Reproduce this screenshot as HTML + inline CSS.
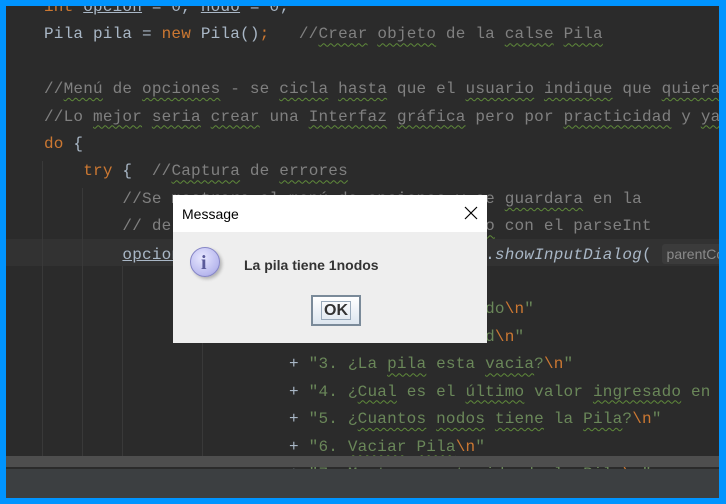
<!DOCTYPE html>
<html><head><meta charset="utf-8"><style>
*{margin:0;padding:0;box-sizing:border-box}
body{width:726px;height:504px;background:#0094ff;position:relative;overflow:hidden;font-family:"Liberation Mono",monospace}
#ed{position:absolute;left:6px;top:6px;width:713px;height:463px;background:#2b2b2b;overflow:hidden}
#bot{position:absolute;left:6px;top:469px;width:713px;height:29px;background:#3c3f41}
#bar{position:absolute;left:0;top:450px;width:713px;height:11px;background:#4e4e4e}
.hl{position:absolute;left:0;top:233px;width:713px;height:27px;background:#323232}
.g{position:absolute;width:1px;background:#393939}
#code{position:absolute;left:38px;top:-12px;font-size:16px;line-height:27.4px;color:#a9b7c6;white-space:pre;letter-spacing:0.2px}
.k{color:#cc7832}.c{color:#808080}.s{color:#6a8759}.i{font-style:italic}
.u{text-decoration:underline wavy #5f8a3a;text-decoration-thickness:1px;text-underline-offset:4px}
.h{font-family:"Liberation Sans",sans-serif;font-size:14px;color:#8a8a8a;background:#3b3b3b;padding:2px 5px;border-radius:3px;letter-spacing:0}
#dlg{position:absolute;left:173px;top:195px;width:314px;height:148px;background:#eeeeee;font-family:"Liberation Sans",sans-serif}
#tt{height:37px;background:#fff;font-size:14px;color:#000;padding:11px 0 0 9px;position:relative}
#x{position:absolute;right:9px;top:11px;width:14px;height:14px}
#msg{position:absolute;left:71px;top:62px;font-weight:bold;font-size:14px;color:#333}
#ic{position:absolute;left:17px;top:52px;width:30px;height:30px;border-radius:50%;background:radial-gradient(circle at 40% 35%,#e8e8ff,#b8b8ee 70%,#8c8cd0);box-shadow:2px 2px 3px rgba(0,0,0,.25);border:1px solid #8686c6}
#ic span{position:absolute;left:10px;top:4px;font:bold 20px "Liberation Serif",serif;color:#5a5a9a}
#ok{position:absolute;left:138px;top:100px;width:50px;height:31px;border:2px solid #7a8a99;background:linear-gradient(#fff,#dde6ef);font-weight:bold;font-size:16px;color:#333;text-align:center;line-height:27px}
#ok span{border:1px solid #99aabb;padding:0 2px}
</style></head><body>
<div id="ed">
<div class="hl"></div>
<div class="g" style="left:36px;top:155px;height:300px"></div>
<div class="g" style="left:76px;top:182px;height:273px"></div>
<div class="g" style="left:116px;top:260px;height:195px"></div>
<div class="g" style="left:196px;top:260px;height:195px"></div>
<div id="code"><span class="k">int</span> <span style="text-decoration:underline">opcion</span> = 0, <span style="text-decoration:underline">nodo</span> = 0;
Pila pila = <span class="k">new</span> Pila()<span class="k">;</span>   <span class="c">//<span class="u">Crear</span> <span class="u">objeto</span> de la <span class="u">calse</span> <span class="u">Pila</span></span>

<span class="c">//<span class="u">Menú</span> de <span class="u">opciones</span> - se <span class="u">cicla</span> <span class="u">hasta</span> que el <span class="u">usuario</span> <span class="u">indique</span> que <span class="u">quiera</span> salir</span>
<span class="c">//Lo <span class="u">mejor</span> <span class="u">seria</span> <span class="u">crear</span> una <span class="u">Interfaz</span> <span class="u">gráfica</span> pero por <span class="u">practicidad</span> y <span class="u">ya</span></span>
<span class="k">do</span> {
    <span class="k">try</span> {  <span class="c">//<span class="u">Captura</span> de <span class="u">errores</span></span>
        <span class="c">//Se mostrara el menú de <span class="u">opciones</span> y se <span class="u">guardara</span> en la</span>
        <span class="c">// de la opcion se convertira a <span class="u">entero</span> con el parseInt</span>
        <span style="text-decoration:underline">opcion</span> = Integer.<span class="i">parseInt</span>(JOptionPane.<span class="i">showInputDialog</span>( <span class="h">parentComponent: null</span>
                         <span class="s">"Menu de opciones</span><span class="k">\n</span><span class="s">"</span>
                         <span class="s">+ "1. Insertar un nodo</span><span class="k">\n</span><span class="s">"</span>
                         <span class="s">+ "2. Eliminar un nod</span><span class="k">\n</span><span class="s">"</span>
                         + <span class="s">"3. ¿La <span class="u">pila</span> esta <span class="u">vacia</span>?</span><span class="k">\n</span><span class="s">"</span>
                         + <span class="s">"4. ¿<span class="u">Cual</span> es el <span class="u">último</span> valor <span class="u">ingresado</span> en la Pila?</span>
                         + <span class="s">"5. ¿<span class="u">Cuantos</span> <span class="u">nodos</span> <span class="u">tiene</span> la <span class="u">Pila</span>?</span><span class="k">\n</span><span class="s">"</span>
                         + <span class="s">"6. <span class="u">Vaciar</span> <span class="u">Pila</span></span><span class="k">\n</span><span class="s">"</span>
                         + <span class="s">"7. Mostrar contenido de la Pila</span><span class="k">\n</span><span class="s">"</span></div>
<div id="bar"></div>
</div>
<div id="bot"></div>
<div id="dlg">
<div id="tt">Message<svg id="x" viewBox="0 0 14 14"><path d="M1 1L13 13M13 1L1 13" stroke="#000" stroke-width="1.2"/></svg></div>
<div id="ic"><span>i</span></div>
<div id="msg">La pila tiene 1nodos</div>
<div id="ok"><span>OK</span></div>
</div>
</body></html>
